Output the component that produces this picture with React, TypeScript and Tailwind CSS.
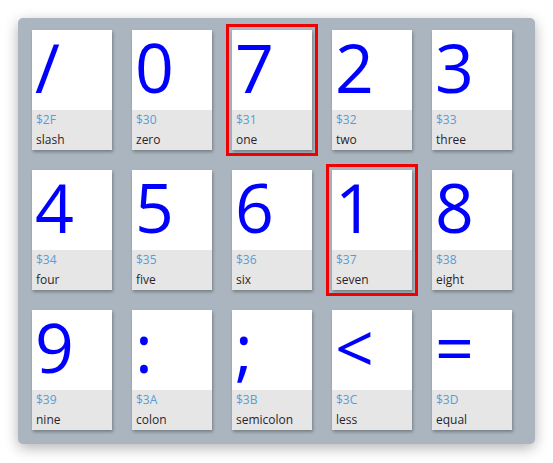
import React from "react";

const items: { g: string; hex: string; name: string; sel?: boolean }[] = [
  { g: "/", hex: "$2F", name: "slash" },
  { g: "0", hex: "$30", name: "zero" },
  { g: "7", hex: "$31", name: "one", sel: true },
  { g: "2", hex: "$32", name: "two" },
  { g: "3", hex: "$33", name: "three" },
  { g: "4", hex: "$34", name: "four" },
  { g: "5", hex: "$35", name: "five" },
  { g: "6", hex: "$36", name: "six" },
  { g: "1", hex: "$37", name: "seven", sel: true },
  { g: "8", hex: "$38", name: "eight" },
  { g: "9", hex: "$39", name: "nine" },
  { g: ":", hex: "$3A", name: "colon" },
  { g: ";", hex: "$3B", name: "semicolon" },
  { g: "<", hex: "$3C", name: "less" },
  { g: "=", hex: "$3D", name: "equal" },
];

export default function App() {
  return (
    <div className="w-[553px] h-[463px] bg-white pt-[18px] pl-[18px]" style={{ fontFamily: '"Open Sans", sans-serif' }}>
      <div className="w-[517px] h-[426px] bg-[#aab5bf] rounded-[5px] shadow-[0_4px_14px_rgba(0,0,0,0.3)] pt-[12px] pl-[14px]">
        <div className="grid grid-cols-[repeat(5,80px)] gap-x-[20px] gap-y-[20px]">
          {items.map((it) => (
            <div
              key={it.hex}
              className={
                "w-[80px] h-[120px] flex flex-col shadow-[1px_2px_3px_rgba(0,0,0,0.3)] " +
                (it.sel ? "outline-[3px] outline-solid outline-[#f00000] outline-offset-[3px]" : "")
              }
            >
              <div className="h-[80px] bg-white pl-[3px] text-[68px] leading-[74px] text-[#0000ff] overflow-hidden">
                {it.g}
              </div>
              <div className="h-[40px] bg-[#e6e6e6] pl-[4px] text-[12px] leading-[20px]">
                <div className="text-[#5b9bd5]">{it.hex}</div>
                <div className="text-[#2b1f2b]">{it.name}</div>
              </div>
            </div>
          ))}
        </div>
      </div>
    </div>
  );
}
